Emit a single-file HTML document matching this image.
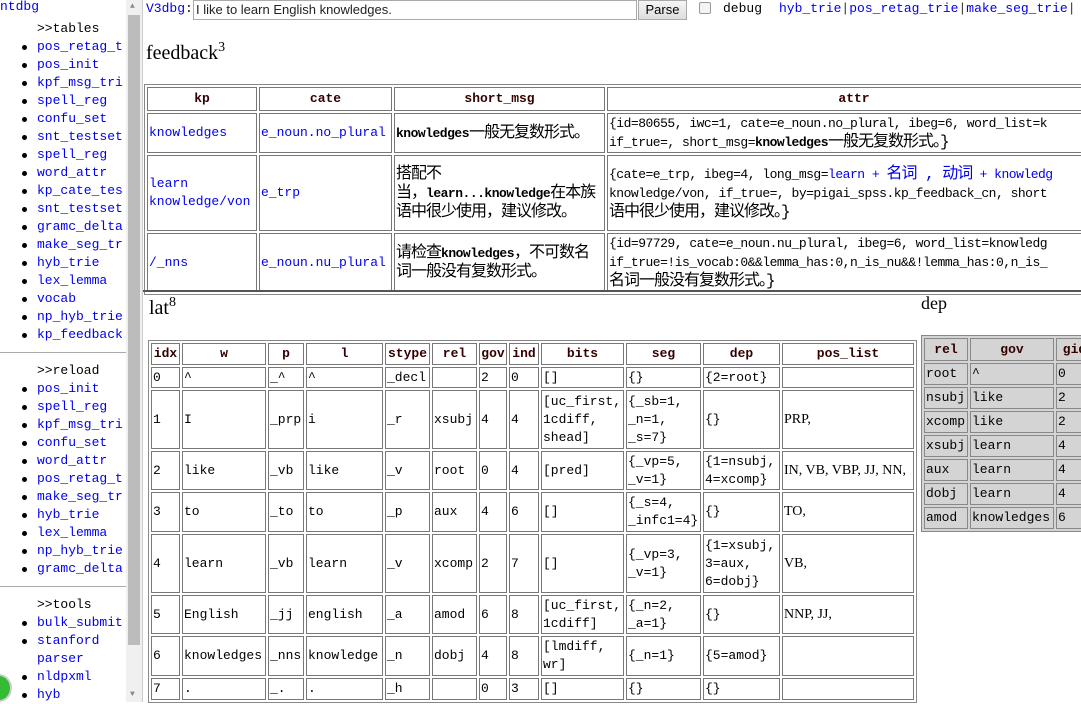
<!DOCTYPE html>
<html><head><meta charset="utf-8">
<style>
*{margin:0;padding:0;box-sizing:border-box}
body{width:1081px;height:702px;overflow:hidden;background:#fff;position:relative;font-family:"Liberation Mono","Noto Sans CJK SC",monospace;font-size:13px;color:#000}
.a{position:absolute;white-space:nowrap}
.l{color:#00e}
.side div{position:absolute;left:37px;line-height:18px;color:#00e;white-space:nowrap}
.side div.b:before{content:"";position:absolute;left:-15px;top:7px;width:5px;height:5px;border-radius:50%;background:#000}
.side .h{color:#000;left:37px}
table{position:absolute;border-collapse:separate;border-spacing:2px;border:1px solid #888;table-layout:fixed}
td,th{border:1px solid #777;padding:0 1px;vertical-align:middle;text-align:left;line-height:18px;overflow:hidden;font-weight:normal}
th{font-weight:bold;color:#300;text-align:center}
.cj{font-family:"Liberation Mono","Noto Sans CJK SC",monospace;font-size:16px;line-height:19px;letter-spacing:-1px}
.cj .e{font-size:13px;letter-spacing:-0.5px}
h2{position:absolute;font-family:"Liberation Serif",serif;font-weight:normal;font-size:20px}
h2 sup{font-size:14px;vertical-align:8px}
.dep{background:#d4d4d4}
.dep td,.dep th{border-color:#888}
.sr{font-family:"Liberation Serif",serif;font-size:14px}
</style></head><body>
<div class="side">
<div class="a" style="left:0;top:-2px;color:#00e;position:absolute">ntdbg</div>
<div class="h" style="top:20px">&gt;&gt;tables</div>
<div class="b" style="top:38px">pos_retag_t</div>
<div class="b" style="top:56px">pos_init</div>
<div class="b" style="top:74px">kpf_msg_tri</div>
<div class="b" style="top:92px">spell_reg</div>
<div class="b" style="top:110px">confu_set</div>
<div class="b" style="top:128px">snt_testset</div>
<div class="b" style="top:146px">spell_reg</div>
<div class="b" style="top:164px">word_attr</div>
<div class="b" style="top:182px">kp_cate_tes</div>
<div class="b" style="top:200px">snt_testset</div>
<div class="b" style="top:218px">gramc_delta</div>
<div class="b" style="top:236px">make_seg_tr</div>
<div class="b" style="top:254px">hyb_trie</div>
<div class="b" style="top:272px">lex_lemma</div>
<div class="b" style="top:290px">vocab</div>
<div class="b" style="top:308px">np_hyb_trie</div>
<div class="b" style="top:326px">kp_feedback</div>
<div class="h" style="top:362px">&gt;&gt;reload</div>
<div class="b" style="top:380px">pos_init</div>
<div class="b" style="top:398px">spell_reg</div>
<div class="b" style="top:416px">kpf_msg_tri</div>
<div class="b" style="top:434px">confu_set</div>
<div class="b" style="top:452px">word_attr</div>
<div class="b" style="top:470px">pos_retag_t</div>
<div class="b" style="top:488px">make_seg_tr</div>
<div class="b" style="top:506px">hyb_trie</div>
<div class="b" style="top:524px">lex_lemma</div>
<div class="b" style="top:542px">np_hyb_trie</div>
<div class="b" style="top:560px">gramc_delta</div>
<div class="h" style="top:596px">&gt;&gt;tools</div>
<div class="b" style="top:614px">bulk_submit</div>
<div class="b" style="top:632px">stanford</div>
<div style="top:650px">parser</div>
<div class="b" style="top:668px">nldpxml</div>
<div class="b" style="top:686px">hyb</div>
</div>
<div class="a" style="left:0;top:352px;width:126px;height:1px;background:#aaa"></div>
<div class="a" style="left:0;top:586px;width:126px;height:1px;background:#aaa"></div>
<div class="a" style="left:-14px;top:674px;width:26px;height:28px;border-radius:50%;background:#3b3;border:2px solid #ccc"></div>
<div class="a" style="left:126px;top:0;width:16px;height:702px;background:#f0f0f0"></div>
<div class="a" style="left:128px;top:15px;width:12px;height:630px;background:#bcbcbc"></div>
<div class="a" style="left:130px;top:2px;font-size:8px;color:#888">▲</div>
<div class="a" style="left:130px;top:690px;font-size:8px;color:#888">▼</div>
<div class="a" style="left:142px;top:0;width:1px;height:702px;background:#ccc"></div>
<div class="a l" style="left:146px;top:1px">V3dbg<span style="color:#000">:</span></div>
<div class="a" style="left:193px;top:0;width:444px;height:20px;border:1px solid #aaa;font-family:'Liberation Sans',sans-serif;font-size:13px;padding:1px 2px;color:#222">I like to learn English knowledges.</div>
<div class="a" style="left:638px;top:0;width:49px;height:20px;border:1px solid #aaa;background:linear-gradient(#f5f5f5,#ddd);font-family:'Liberation Sans',sans-serif;font-size:13px;text-align:center;line-height:18px">Parse</div>
<div class="a" style="left:699px;top:2px;width:12px;height:12px;border:1px solid #999;border-radius:2px;background:#f4f4f4"></div>
<div class="a" style="left:723px;top:1px">debug</div>
<div class="a l" style="left:779px;top:1px">hyb_trie<span style="color:#333">|</span>pos_retag_trie<span style="color:#333">|</span>make_seg_trie<span style="color:#333">|</span></div>
<h2 style="left:146px;top:40px">feedback<sup>3</sup></h2>
<table style="left:144px;top:84px;width:960px">
<tr style="height:24px"><th style="width:110px">kp</th><th style="width:133px">cate</th><th style="width:211px">short_msg</th><th>attr</th></tr>
<tr style="height:38px"><td class="l">knowledges</td><td class="l">e_noun.no_plural</td><td class="cj"><b class="e">knowledges</b>一般无复数形式。</td><td class="cj" style="white-space:nowrap"><span class="e">{id=80655, iwc=1, cate=e_noun.no_plural, ibeg=6, word_list=k</span><br><span class="e">if_true=, short_msg=<b>knowledges</b></span>一般无复数形式。}</td></tr>
<tr style="height:76px"><td class="l">learn<br>knowledge/von</td><td class="l">e_trp</td><td class="cj">搭配不<br>当，<b class="e">learn...knowledge</b>在本族语中很少使用，建议修改。</td><td class="cj" style="white-space:nowrap"><span class="e">{cate=e_trp, ibeg=4, long_msg=<span class="l">learn + </span></span><span class="l">名词 , 动词</span><span class="e l"> + knowledg</span><br><span class="e">knowledge/von, if_true=, by=pigai_spss.kp_feedback_cn, short</span><br>语中很少使用，建议修改。}</td></tr>
<tr style="height:58px"><td class="l">/_nns</td><td class="l">e_noun.nu_plural</td><td class="cj">请检查<b class="e">knowledges</b>，不可数名词一般没有复数形式。</td><td class="cj" style="white-space:nowrap"><span class="e">{id=97729, cate=e_noun.nu_plural, ibeg=6, word_list=knowledg</span><br><span class="e">if_true=!is_vocab:0&amp;&amp;lemma_has:0,n_is_nu&amp;&amp;!lemma_has:0,n_is_</span><br>名词一般没有复数形式。}</td></tr>
</table>
<div class="a" style="left:143px;top:290px;width:938px;height:2px;background:#555"></div>
<h2 style="left:149px;top:295px">lat<sup>8</sup></h2>
<h2 style="left:921px;top:293px;font-size:18px">dep</h2>
<table style="left:148px;top:340px;width:769px">
<tr style="height:22px"><th style="width:29px">idx</th><th style="width:84px">w</th><th style="width:36px">p</th><th style="width:77px">l</th><th style="width:45px">stype</th><th style="width:45px">rel</th><th style="width:28px">gov</th><th style="width:30px">ind</th><th style="width:83px">bits</th><th style="width:75px">seg</th><th style="width:77px">dep</th><th style="width:132px">pos_list</th></tr>
<tr style="height:21px"><td>0</td><td>^</td><td>_^</td><td>^</td><td>_decl</td><td></td><td>2</td><td>0</td><td>[]</td><td>{}</td><td>{2=root}</td><td></td></tr>
<tr style="height:59px"><td>1</td><td>I</td><td>_prp</td><td>i</td><td>_r</td><td>xsubj</td><td>4</td><td>4</td><td>[uc_first,<br>1cdiff,<br>shead]</td><td>{_sb=1,<br>_n=1,<br>_s=7}</td><td>{}</td><td class="sr">PRP,</td></tr>
<tr style="height:39px"><td>2</td><td>like</td><td>_vb</td><td>like</td><td>_v</td><td>root</td><td>0</td><td>4</td><td>[pred]</td><td>{_vp=5,<br>_v=1}</td><td>{1=nsubj,<br>4=xcomp}</td><td class="sr">IN, VB, VBP, JJ, NN,</td></tr>
<tr style="height:40px"><td>3</td><td>to</td><td>_to</td><td>to</td><td>_p</td><td>aux</td><td>4</td><td>6</td><td>[]</td><td>{_s=4,<br>_infc1=4}</td><td>{}</td><td class="sr">TO,</td></tr>
<tr style="height:59px"><td>4</td><td>learn</td><td>_vb</td><td>learn</td><td>_v</td><td>xcomp</td><td>2</td><td>7</td><td>[]</td><td>{_vp=3,<br>_v=1}</td><td>{1=xsubj,<br>3=aux,<br>6=dobj}</td><td class="sr">VB,</td></tr>
<tr style="height:39px"><td>5</td><td>English</td><td>_jj</td><td>english</td><td>_a</td><td>amod</td><td>6</td><td>8</td><td>[uc_first,<br>1cdiff]</td><td>{_n=2,<br>_a=1}</td><td>{}</td><td class="sr">NNP, JJ,</td></tr>
<tr style="height:40px"><td>6</td><td>knowledges</td><td>_nns</td><td>knowledge</td><td>_n</td><td>dobj</td><td>4</td><td>8</td><td>[lmdiff,<br>wr]</td><td>{_n=1}</td><td>{5=amod}</td><td></td></tr>
<tr style="height:22px"><td>7</td><td>.</td><td>_.</td><td>.</td><td>_h</td><td></td><td>0</td><td>3</td><td>[]</td><td>{}</td><td>{}</td><td></td></tr>
</table>
<table class="dep" style="left:921px;top:335px;width:175px">
<tr style="height:23px"><th style="width:44px">rel</th><th style="width:84px">gov</th><th>gid</th></tr>
<tr style="height:22px"><td>root</td><td>^</td><td>0</td></tr>
<tr style="height:22px"><td>nsubj</td><td>like</td><td>2</td></tr>
<tr style="height:22px"><td>xcomp</td><td>like</td><td>2</td></tr>
<tr style="height:22px"><td>xsubj</td><td>learn</td><td>4</td></tr>
<tr style="height:22px"><td>aux</td><td>learn</td><td>4</td></tr>
<tr style="height:22px"><td>dobj</td><td>learn</td><td>4</td></tr>
<tr style="height:22px"><td>amod</td><td>knowledges</td><td>6</td></tr>
</table>
</body></html>
